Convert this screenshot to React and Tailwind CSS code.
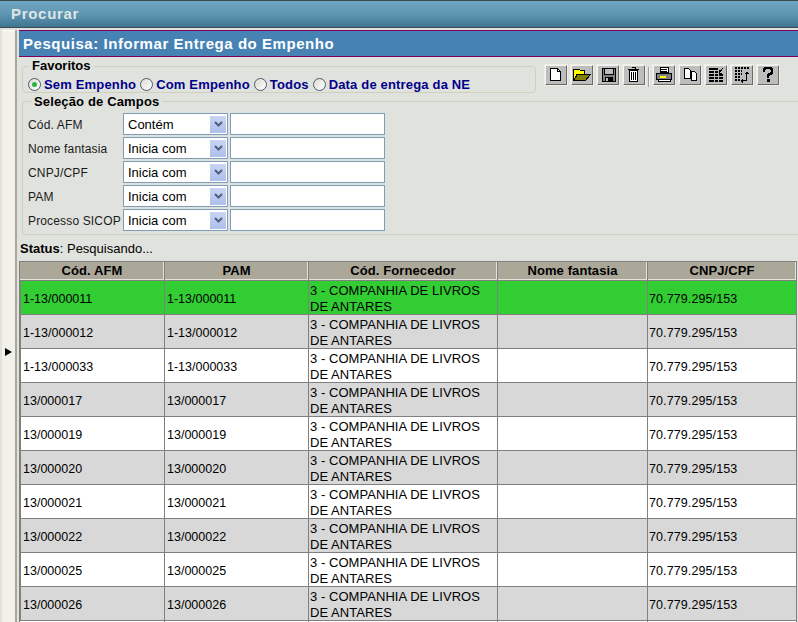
const rows = [
  ["1-13/000011", "g"], ["1-13/000012", "s"], ["1-13/000033", "w"], ["13/000017", "s"], ["13/000019", "w"],
  ["13/000020", "s"], ["13/000021", "w"], ["13/000022", "s"], ["13/000025", "w"], ["13/000026", "s"],
];
const filters = [["Cód. AFM", "Contém"], ["Nome fantasia", "Inicia com"], ["CNPJ/CPF", "Inicia com"], ["PAM", "Inicia com"], ["Processo SICOP", "Inicia com"]];
const radios = ["Sem Empenho", "Com Empenho", "Todos", "Data de entrega da NE"];
const heads = ["Cód. AFM", "PAM", "Cód. Fornecedor", "Nome fantasia", "CNPJ/CPF"];

function Radio({ on }) {
  return (
    <span className="relative inline-block h-[13px] w-[13px] shrink-0 rounded-full border border-[#4a5b6e] bg-gradient-to-br from-[#dcdcd2] to-white">
      {on && <span className="absolute left-[3px] top-[3px] h-[5px] w-[5px] rounded-full bg-[#2fb344]" />}
    </span>
  );
}

function Tool({ children }) {
  return (
    <div className="h-[20px] w-[22px] border border-t-[#f4f4f4] border-l-[#f4f4f4] border-r-[#6a6a6a] border-b-[#6a6a6a] bg-[#bdbdbd] outline-1 outline-[#f0efe4]">
      <svg viewBox="0 0 20 18" width="20" height="18" shapeRendering="crispEdges" className="block">{children}</svg>
    </div>
  );
}

function Chevron() {
  return (
    <div className="flex h-[17px] w-[16px] items-center justify-center bg-gradient-to-b from-[#c9d5f2] to-[#aebfec]">
      <svg width="9" height="6" viewBox="0 0 9 6"><path d="M1 1l3.5 3.5L8 1" fill="none" stroke="#4d6185" strokeWidth="2" /></svg>
    </div>
  );
}

function Cell({ bg, className, children }) {
  return (
    <td className={`border border-[#808080] p-0 align-middle ${bg}`}>
      <div className={`flex h-[33px] items-center pt-[2px] text-[12.5px] leading-[16px] ${className}`}>
        <span>{children}</span>
      </div>
    </td>
  );
}

export default function App() {
  return (
    <div className="h-[622px] w-[798px] overflow-hidden bg-[#e0e2de] text-[12px] text-black" style={{ fontFamily: '"Liberation Sans", Arial, sans-serif' }}>
      <div className="h-[28px] border-y border-y-[#3d4a50] bg-gradient-to-b from-[#6fa6c3] via-[#5f96b2] to-[#3f7590] pl-[11px] text-[15px] font-bold leading-[26px] tracking-[0.7px] text-[#dfe5e5]">
        Procurar
      </div>
      <div className="flex h-[594px]">
        <div className="flex w-[19px] shrink-0 pt-[2px]">
          <div className="w-[2px] bg-[#e0e2de]" />
          <div className="flex w-[13px] items-center border-t border-t-white bg-[#f1f1e9] pl-[3px]">
            <span className="mt-[50px] h-0 w-0 border-y-[4px] border-l-[7px] border-y-transparent border-l-black" />
          </div>
          <div className="w-[2px] bg-[#aca899]" />
          <div className="w-[2px] bg-[#e0e2de]" />
        </div>
        <div className="min-w-0 flex-1 pt-[2px]">
          <div className="h-[27px] border-y border-y-[#800060] bg-[#4682b4] pl-[4px] text-[15px] font-bold leading-[25px] tracking-[0.55px] text-white">
            Pesquisa: Informar Entrega do Empenho
          </div>
          <div className="flex pl-[3px] pt-[4px]">
            <fieldset className="h-[32px] w-[514px] rounded-[4px] border border-[#d0d0bf]">
              <legend className="ml-[6px] px-[3px] text-[13px] font-bold leading-[10px]">Favoritos</legend>
              <div className="flex h-[20px] items-center pl-[5px] pt-[7px] text-[13px] font-bold tracking-[0.17px] text-[#00008b]">
                {radios.map((r, i) => (
                  <label key={r} className="mr-[4px] flex items-center gap-[3px] whitespace-nowrap">
                    <Radio on={i === 0} />{r}
                  </label>
                ))}
              </div>
            </fieldset>
            <div className="ml-[9px] mt-[4px] flex items-start gap-[4px]">
              <Tool><path d="M4.5 2.5h7l3 3v9h-10z" fill="#fff" stroke="#000" /><path d="M11.5 2.5v3h3" fill="none" stroke="#000" /></Tool>
              <Tool><path d="M1.5 3.5h6l1 1h4v4H5l-3.5 6z" fill="#ffff00" stroke="#000" /><path d="M5.5 8.5h13l-5 6H1.5z" fill="#808000" stroke="#000" /></Tool>
              <Tool><path d="M4.5 2.5h13v13h-13z" fill="#808080" stroke="#000" /><path d="M6.5 2.5h9v6h-9z" fill="#bdbdbd" stroke="#000" /><path d="M7 11h8v5H7z" fill="#000" /><path d="M8 12h2v3H8z" fill="#bdbdbd" /></Tool>
              <Tool><path d="M4 3.5h11M7.5 1.5h4v2" stroke="#000" fill="none" /><path d="M5.5 4.5h8v11h-8z" fill="#fff" stroke="#000" /><path d="M7.5 6v8M9.5 6v8M11.5 6v8" stroke="#000" /></Tool>
              <div className="mx-[-1px] mt-[2px] h-[20px] w-[2px] bg-[#f4f4f0] shadow-[inset_1px_0_0_#a0a0a0]" />
              <Tool><path d="M6.5 1.5h8v5h-8z" fill="#fff" stroke="#000" /><path d="M7 3h6M7 5h6" stroke="#000" /><path d="M2.5 7.5h15v6h-15z" fill="#808080" stroke="#000" /><path d="M6 10h6v2H6z" fill="#ffff00" /><path d="M4.5 13.5h12v2h-12z" fill="#fff" stroke="#000" /></Tool>
              <Tool><path d="M4.5 2.5h4l2 2v8h-6z" fill="#fff" stroke="#000" /><path d="M11.5 5.5h3l2 2v7h-5z" fill="#fff" stroke="#000" /></Tool>
              <Tool><path d="M3 3h9M3 6h9M3 9h14M3 12h14M3 15h14" stroke="#000" strokeWidth="2" /><path d="M8 4v12M12 8v8" stroke="#bdbdbd" /><path d="M13 7l4-5M13 4v3h3" stroke="#000" fill="none" strokeWidth="1" /></Tool>
              <Tool><path d="M3 2h14M3 5h7M3 8h7M3 11h5M3 14h5" stroke="#000" strokeDasharray="2 1" strokeWidth="2" /><path d="M14.5 6v8.5H10" stroke="#000" fill="none" /><path d="M12.5 7.5h4v-1h-1v-1h-2v1h-1zM11 12.5v4h-1v-1H9v-2h1v-1z" fill="#000" /></Tool>
              <Tool><path d="M6 6V3h1V2h6v1h1v4h-1v1h-2v1h-1v3" fill="none" stroke="#000" strokeWidth="2" /><path d="M9 13h3v3H9z" fill="#000" /></Tool>
            </div>
          </div>
          <fieldset className="ml-[3px] mt-[2px] h-[140px] rounded-l-[4px] border border-r-0 border-[#d0d0bf]">
            <legend className="ml-[8px] px-[3px] pt-[2px] text-[13px] font-bold leading-[10px] tracking-[0.15px]">Seleção de Campos</legend>
            <div className="flex flex-col gap-[2px] pl-[5px] pt-[6px]">
              {filters.map(([l, v]) => (
                <div key={l} className="flex h-[22px] items-center">
                  <span className="w-[95px] whitespace-nowrap pt-[2px] text-[12px] tracking-[0.15px] text-[#1a1a1a]">{l}</span>
                  <div className="flex h-[22px] w-[105px] items-center justify-between border border-[#7f9db9] bg-white pl-[4px] pr-[1px] text-[13px]">
                    <span className="pt-[2px]">{v}</span><Chevron />
                  </div>
                  <div className="ml-[2px] h-[22px] w-[155px] border border-[#7f9db9] bg-white" />
                </div>
              ))}
            </div>
          </fieldset>
          <div className="h-[26px] pl-[1px] pt-[7px] text-[13px] leading-[14px]"><b>Status</b>: Pesquisando...</div>
          <table className="w-[777px] table-fixed border-collapse">
            <colgroup><col className="w-[145px]" /><col className="w-[144px]" /><col className="w-[189px]" /><col className="w-[150px]" /><col className="w-[149px]" /></colgroup>
            <thead>
              <tr className="h-[19px]">
                {heads.map((h) => (
                  <th key={h} className="border border-[#808080] bg-[#aca899] p-0 text-center text-[13px] font-bold leading-[14px] tracking-[0.1px] text-black shadow-[inset_-1px_-1px_0_#e4e4dc]">{h}</th>
                ))}
              </tr>
            </thead>
            <tbody>
              {rows.map(([id, k]) => {
                const c = k === "g" ? "bg-[#32cd32]" : k === "s" ? "bg-[#d8d8d8]" : "bg-white";
                return (
                  <tr key={id}>
                    <Cell bg={c} className="pl-[3px] shadow-[inset_1px_0_0_#808080]">{id}</Cell>
                    <Cell bg={c} className="pl-[2px]">{id}</Cell>
                    <Cell bg={c} className="pl-[1px] !text-[13px] tracking-[0.05px]">3 - COMPANHIA DE LIVROS DE ANTARES</Cell>
                    <Cell bg={c} className="" />
                    <Cell bg={c} className="pl-[1px] tracking-[0.1px]">70.779.295/153</Cell>
                  </tr>
                );
              })}
              <tr>
                <td className="h-[34px] border border-[#808080] bg-white" />
                <td className="border border-[#808080] bg-white" />
                <td className="border border-[#808080] bg-white" />
                <td className="border border-[#808080] bg-white" />
                <td className="border border-[#808080] bg-white" />
              </tr>
            </tbody>
          </table>
        </div>
      </div>
    </div>
  );
}
